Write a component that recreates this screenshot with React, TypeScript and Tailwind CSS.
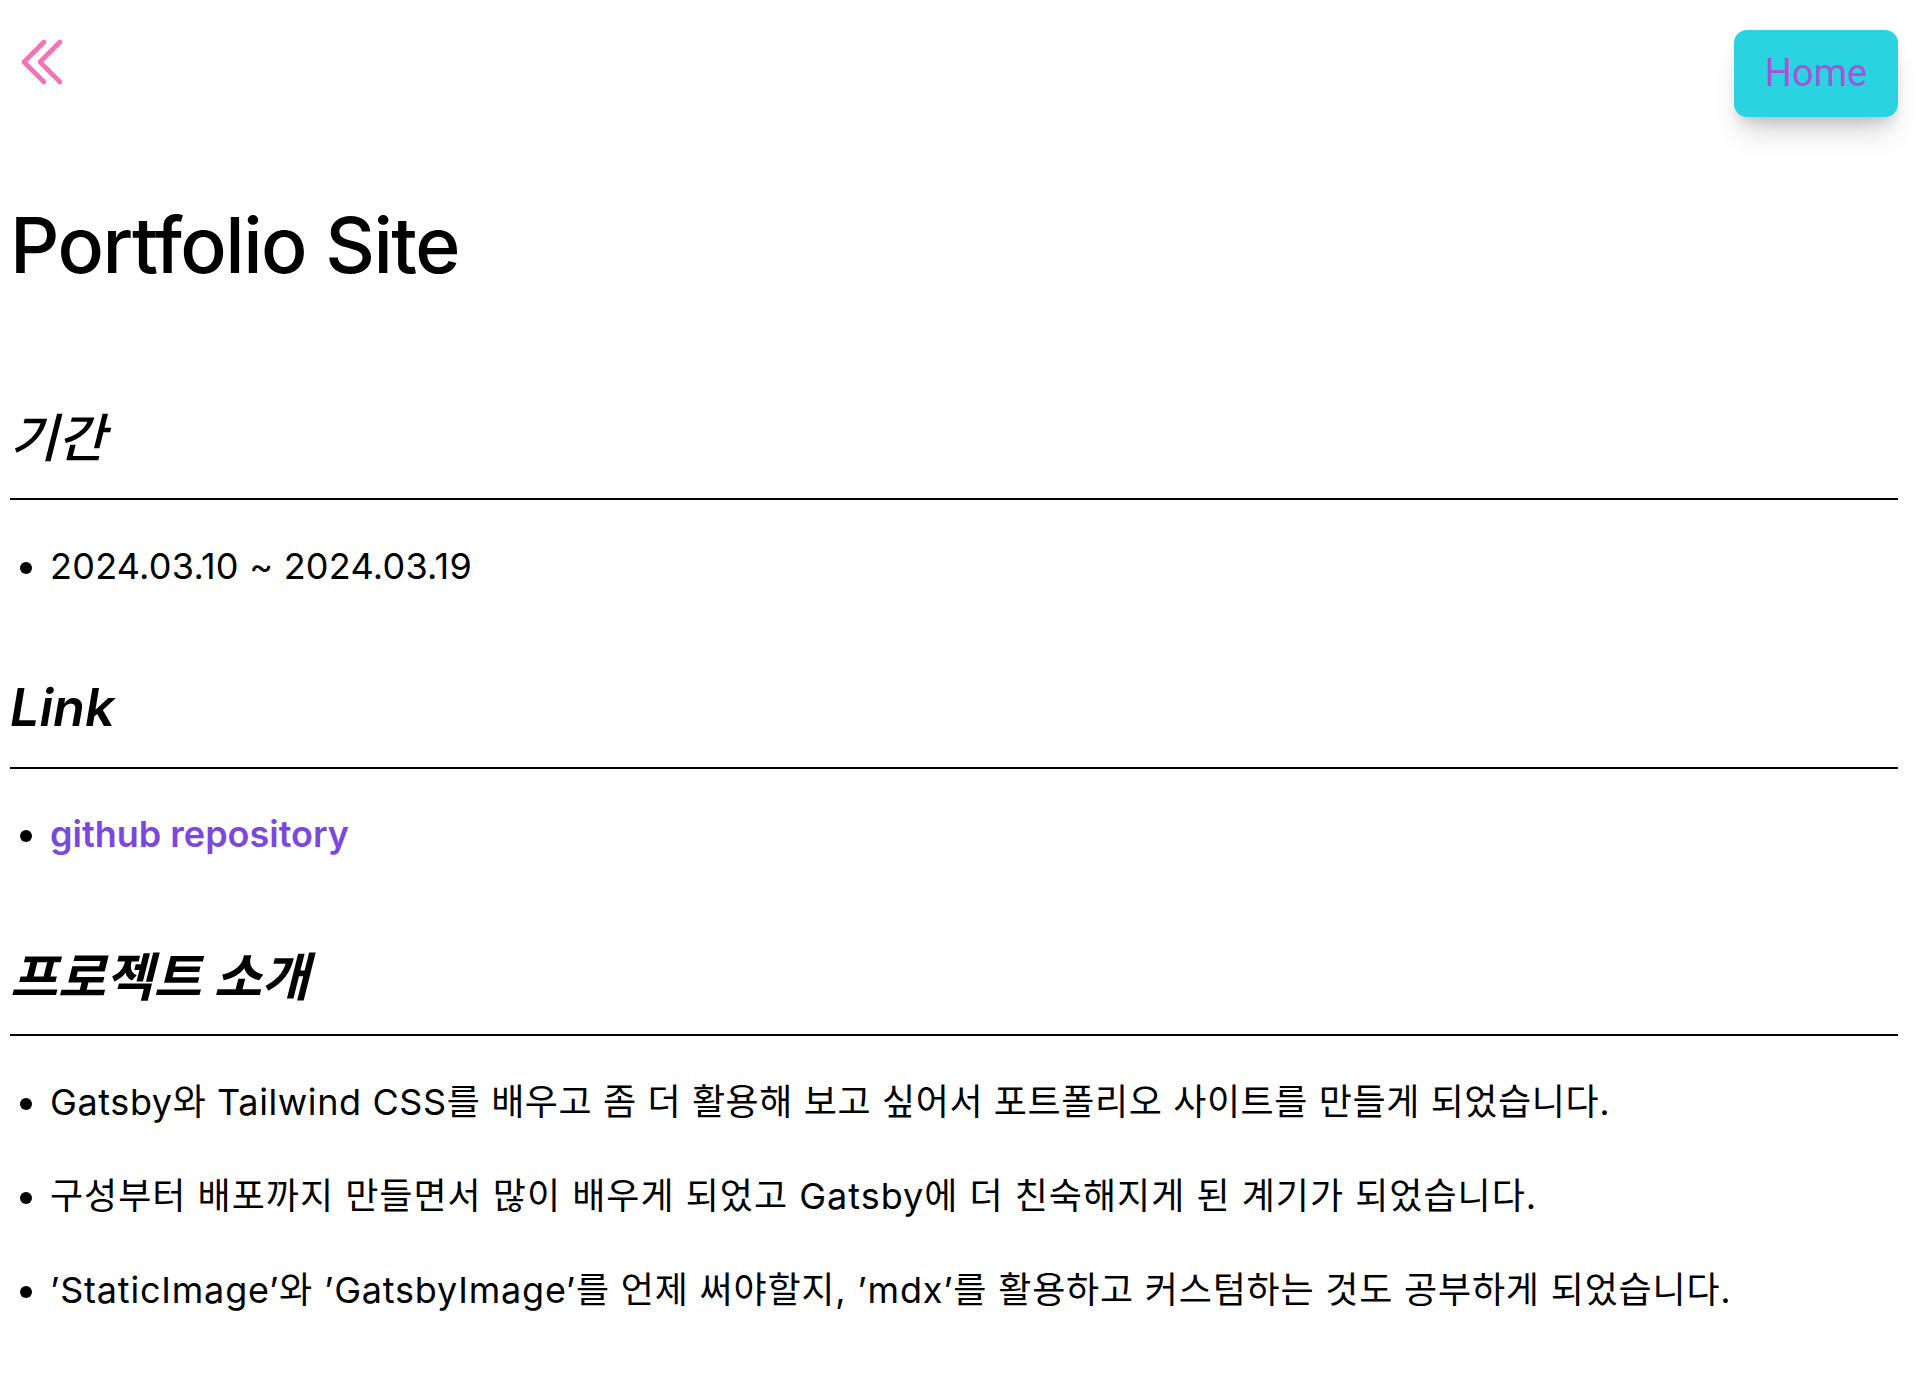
export default function App() {
  return (
    <div className="min-h-screen bg-white text-black font-['Inter','Noto_Sans_CJK_KR',sans-serif] pl-[10px] pr-[31px]">
      <header className="flex items-start justify-between pt-[30px]">
        <a href="#" aria-label="back" className="block">
          <svg
            width="64"
            height="64"
            viewBox="0 0 24 24"
            fill="none"
            stroke="#f472b6"
            strokeWidth={1.75}
            strokeLinecap="round"
            strokeLinejoin="round"
          >
            <path d="m18.75 4.5-7.5 7.5 7.5 7.5m-6-15L5.25 12l7.5 7.5" />
          </svg>
        </a>
        <button className="w-[164px] h-[87px] rounded-[13px] bg-[#2ad3e0] text-[#a655d6] text-[38px] font-['Roboto',sans-serif] shadow-[0_22px_30px_-8px_rgba(0,0,0,0.16),0_10px_14px_-6px_rgba(0,0,0,0.16)]">
          Home
        </button>
      </header>

      <main>
        <h1 className="mt-[80px] text-[77px] leading-[96px] font-medium tracking-[-1.5px]">
          Portfolio Site
        </h1>

        <section className="mt-[114px]">
          <h2 className="text-[52px] leading-[64px] italic font-medium pb-[27px] border-b-2 border-black">
            기간
          </h2>
          <ul className="mt-[42px] list-disc pl-[40px] text-[36px] leading-[48px] tracking-[0.25px]">
            <li>2024.03.10 ~ 2024.03.19</li>
          </ul>
        </section>

        <section className="mt-[86px]">
          <h2 className="text-[52px] leading-[64px] italic font-semibold pb-[27px] border-b-2 border-black">
            Link
          </h2>
          <ul className="mt-[41px] list-disc pl-[40px] text-[36px] leading-[48px]">
            <li>
              <a href="#" className="text-[#7b47e0] font-semibold">
                github repository
              </a>
            </li>
          </ul>
        </section>

        <section className="mt-[88px] pb-[60px]">
          <h2 className="text-[52px] leading-[64px] italic font-bold pb-[24px] border-b-2 border-black">
            프로젝트 소개
          </h2>
          <ul className="mt-[42px] list-disc pl-[40px] text-[36px] leading-[48px] space-y-[46px]">
            <li className="tracking-[0.6px]">
              Gatsby와 Tailwind CSS를 배우고 좀 더 활용해 보고 싶어서 포트폴리오 사이트를 만들게 되었습니다.
            </li>
            <li className="tracking-[1px]">
              구성부터 배포까지 만들면서 많이 배우게 되었고 Gatsby에 더 친숙해지게 된 계기가 되었습니다.
            </li>
            <li className="tracking-[0.8px]">
              ’StaticImage’와 ’GatsbyImage’를 언제 써야할지, ’mdx’를 활용하고 커스텀하는 것도 공부하게 되었습니다.
            </li>
          </ul>
        </section>
      </main>
    </div>
  );
}
